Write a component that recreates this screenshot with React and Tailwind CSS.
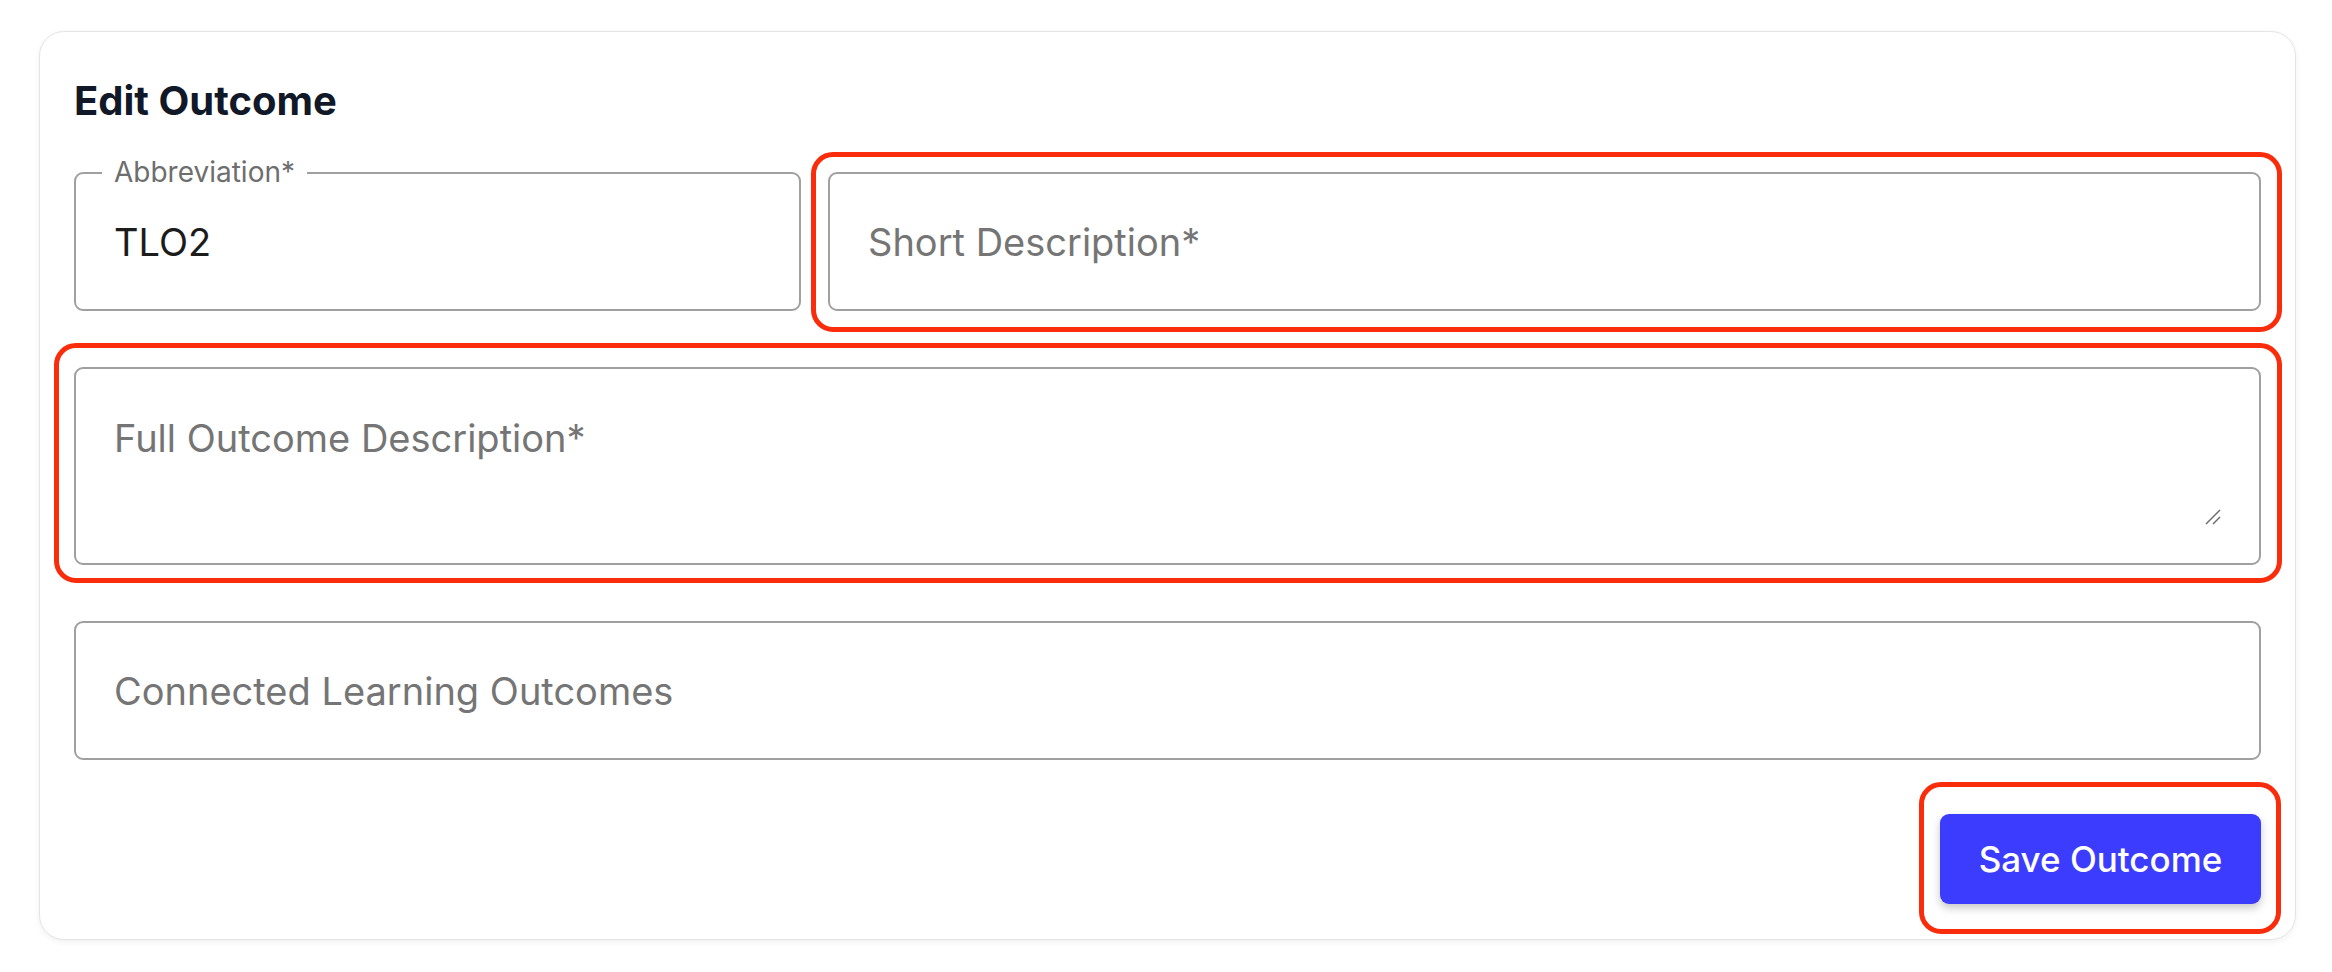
import { useState } from "react";

function Annotation({ className }) {
    return (
        <div
            className={`pointer-events-none absolute rounded-[22px] border-[5px] border-[#f92d0c] ${className}`}
        />
    );
}

export default function App() {
    const [form, setForm] = useState({
        abbreviation: "TLO2",
        short: "",
        full: "",
        connected: ""
    });

    const handleChange = (e) => {
        setForm({ ...form, [e.target.name]: e.target.value });
    };

    return (
        <div className="min-h-screen bg-white pl-[39px] pr-[36px] pt-[31px] font-['Inter',sans-serif]">
            <div className="rounded-[25px] border border-[#e4e4e4] bg-white px-[34px] pt-[46px] pb-[35px] shadow-[0_2px_6px_rgba(0,0,0,0.06)]">
                <h1 className="text-[40px] font-bold leading-[46px] text-[#111827]">Edit Outcome</h1>

                {/* Abbreviation + short description */}
                <div className="mt-[48px] grid grid-cols-[727px_1fr] gap-[27px]">
                    <div className="relative">
                        <input
                            name="abbreviation"
                            value={form.abbreviation}
                            onChange={handleChange}
                            className="h-[139px] w-full rounded-[9px] border-2 border-[#a0a0a0] bg-white px-[38px] text-[38px] text-[#1c1c1c] outline-none"
                        />
                        <span className="absolute left-[28px] top-[-14px] bg-white px-[12px] text-[28px] leading-[28px] text-[#6e6e6e]">
                            Abbreviation*
                        </span>
                    </div>
                    <div className="relative">
                        <input
                            name="short"
                            value={form.short}
                            onChange={handleChange}
                            placeholder="Short Description*"
                            className="h-[139px] w-full rounded-[9px] border-2 border-[#a0a0a0] bg-white px-[38px] text-[38px] text-[#1c1c1c] outline-none placeholder:text-[#757575]"
                        />
                        <Annotation className="-left-[17px] -right-[21px] -top-[20px] -bottom-[21px]" />
                    </div>
                </div>

                {/* Full description */}
                <div className="relative mt-[56px]">
                    <textarea
                        name="full"
                        value={form.full}
                        onChange={handleChange}
                        placeholder="Full Outcome Description*"
                        className="block h-[198px] w-full resize-none rounded-[9px] border-2 border-[#a0a0a0] bg-white px-[38px] pt-[43px] text-[38px] leading-[53px] text-[#1c1c1c] outline-none placeholder:text-[#757575]"
                    />
                    <svg
                        className="pointer-events-none absolute right-[40px] bottom-[40px] h-[16px] w-[16px]"
                        viewBox="0 0 16 16"
                        fill="none"
                        stroke="#6b6b6b"
                        strokeWidth="1.5"
                    >
                        <line x1="1" y1="15" x2="15" y2="1" />
                        <line x1="8" y1="15" x2="15" y2="8" />
                    </svg>
                    <Annotation className="-left-[20px] -right-[21px] -top-[24px] -bottom-[18px]" />
                </div>

                {/* Connected outcomes */}
                <div className="mt-[56px]">
                    <input
                        name="connected"
                        value={form.connected}
                        onChange={handleChange}
                        placeholder="Connected Learning Outcomes"
                        className="h-[139px] w-full rounded-[9px] border-2 border-[#a0a0a0] bg-white px-[38px] text-[38px] text-[#1c1c1c] outline-none placeholder:text-[#757575]"
                    />
                </div>

                <div className="mt-[54px] flex justify-end">
                    <div className="relative">
                        <button
                            type="button"
                            className="h-[90px] w-[321px] rounded-[9px] bg-[#3c3cff] text-[35px] font-medium text-white shadow-[0_4px_8px_rgba(0,0,0,0.22)]"
                        >
                            Save Outcome
                        </button>
                        <Annotation className="-left-[21px] -right-[20px] -top-[32px] -bottom-[30px]" />
                    </div>
                </div>
            </div>
        </div>
    );
}
